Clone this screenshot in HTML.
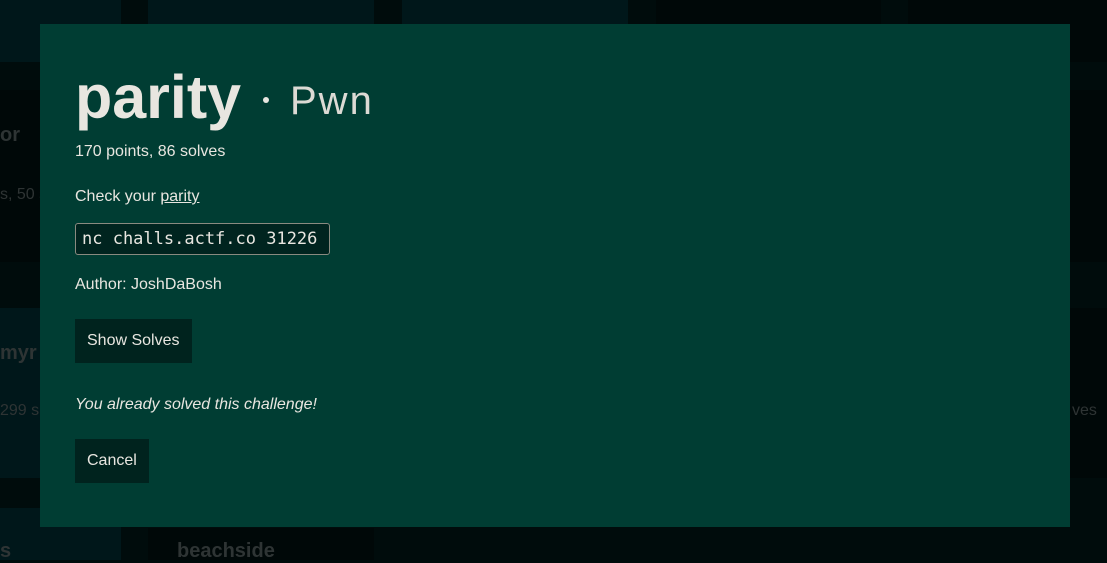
<!DOCTYPE html>
<html><head><meta charset="utf-8"><style>
body{margin:0;width:1107px;height:560px;overflow:hidden;background:#000c0c;position:relative;font-family:"Liberation Sans",sans-serif}
.t{position:absolute;background:#00171a}
.d{background:#000808}
.g{color:#2e3434;position:absolute;font-weight:bold;font-size:20px}
.m{position:absolute;left:40px;top:24px;width:1030px;height:503px;background:#003d33;color:#e8e6e0}
.m *{position:absolute;margin:0;white-space:nowrap}
h1{left:35px;top:38px;font-size:61px;font-weight:bold;line-height:70px;font-family:"Liberation Sans",sans-serif}
.dot{left:223px;top:73px;width:6px;height:6px;border-radius:50%;background:#e8e6e0}
.p{left:250px;top:54px;font-size:40px;letter-spacing:2px;font-family:"Liberation Sans",sans-serif;line-height:46px;color:#dcdad4}
.s{font-size:16px;left:35px}
.code{left:35px;top:199px;height:32px;width:255px;border:1px solid #8a8a80;border-radius:3px;background:#00241f;font-family:"DejaVu Sans Mono","Liberation Mono",monospace;font-size:17px;line-height:30px;padding-left:6px;box-sizing:border-box}
.b{left:35px;background:#00231e;height:44px;font-size:16px;line-height:44px;padding:0 12px}
</style></head><body>
<div class="t" style="left:0;top:0;width:121px;height:62px"></div>
<div class="t d" style="left:0;top:90px;width:121px;height:172px"></div>
<div class="t" style="left:0;top:308px;width:121px;height:170px"></div>
<div class="t" style="left:0;top:508px;width:121px;height:52px"></div>
<div class="t" style="left:148px;top:0;width:226px;height:62px"></div>
<div class="t" style="left:402px;top:0;width:226px;height:62px"></div>
<div class="t d" style="left:656px;top:0;width:225px;height:62px"></div>
<div class="t d" style="left:908px;top:0;width:199px;height:62px"></div>
<div class="t d" style="left:148px;top:528px;width:226px;height:32px"></div>
<div class="t d" style="left:1070px;top:90px;width:37px;height:172px"></div>
<div class="t d" style="left:1070px;top:308px;width:37px;height:170px"></div>
<div class="g" style="left:0;top:124px">or</div>
<div class="g" style="left:0;top:186px;font-weight:normal;font-size:16px">s, 50 s</div>
<div class="g" style="left:0;top:342px">myr</div>
<div class="g" style="left:0;top:402px;font-weight:normal;font-size:16px">299 s</div>
<div class="g" style="left:1072px;top:402px;font-weight:normal;font-size:16px">ves</div>
<div class="g" style="left:0;top:540px">s</div>
<div class="g" style="left:177px;top:540px">beachside</div>
<div class="m">
<h1>parity</h1>
<div class="dot"></div>
<div class="p">Pwn</div>
<div class="s" style="top:119px">170 points, 86 solves</div>
<div class="s" style="top:164px">Check your <u>parity</u>.</div>
<div class="code">nc challs.actf.co 31226</div>
<div class="s" style="top:252px">Author: JoshDaBosh</div>
<div class="b" style="top:295px">Show Solves</div>
<div class="s" style="top:372px;font-style:italic">You already solved this challenge!</div>
<div class="b" style="top:415px">Cancel</div>
</div>
</body></html>
